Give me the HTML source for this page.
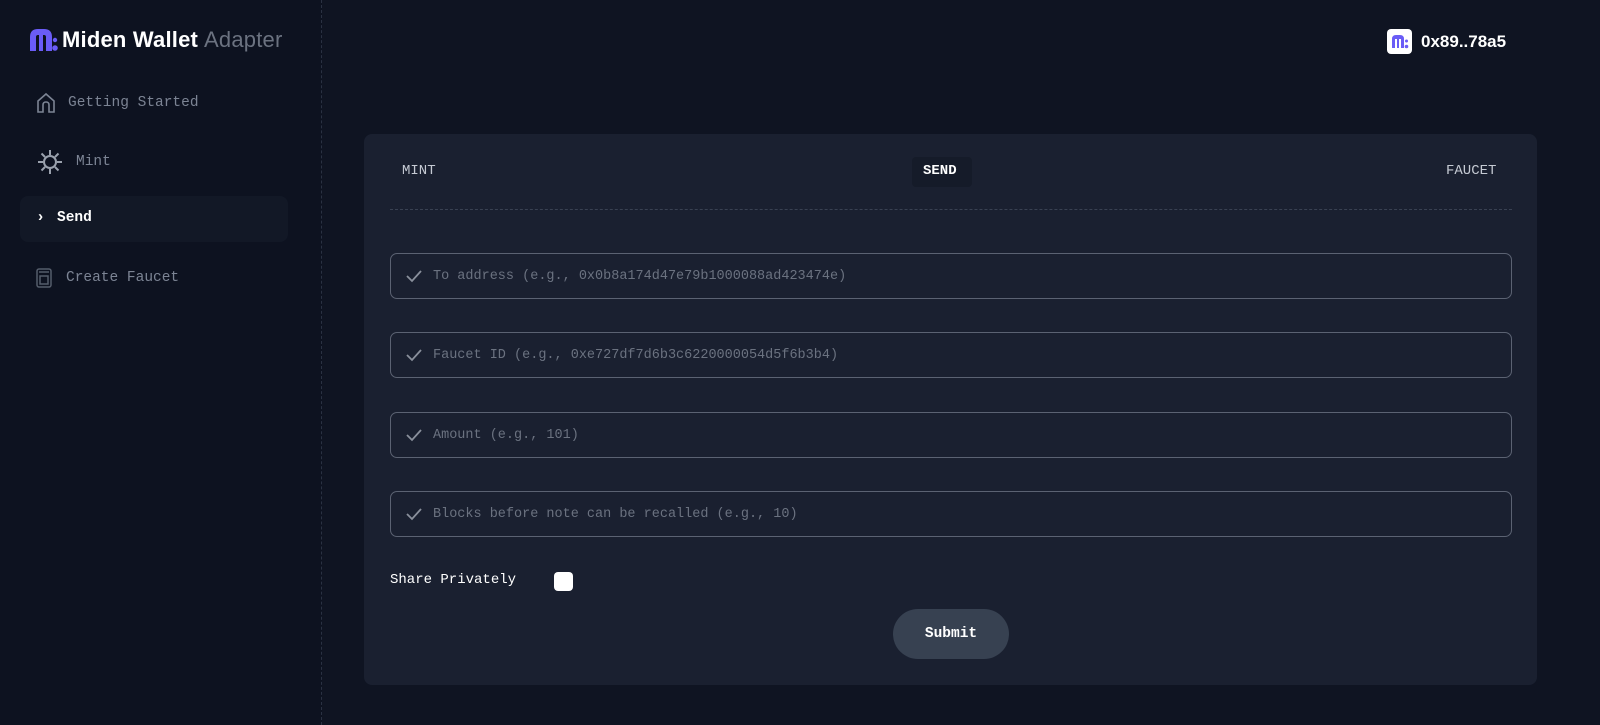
<!DOCTYPE html>
<html><head><meta charset="utf-8"><style>
*{box-sizing:border-box;margin:0;padding:0}
body{width:1600px;height:725px;background:#0f1422;font-family:"Liberation Mono",monospace;color:#fff;position:relative;overflow:hidden}
.side{position:absolute;left:0;top:0;width:322px;height:725px;background:#0d1220;border-right:1px dashed #2a3142}
.logo{position:absolute;left:30px;top:27px;display:flex;align-items:center;font-family:"Liberation Sans",sans-serif;font-size:22px;font-weight:600;letter-spacing:0.2px}
.logo .a{color:#6b7280;font-weight:400;margin-left:6px}
.nav{position:absolute;left:36px;display:flex;align-items:center;font-size:14.5px;color:#7c8494}
.sel{position:absolute;left:20px;top:196px;width:268px;height:46px;background:#121826;border-radius:8px}
.acct{position:absolute;left:1387px;top:29px;display:flex;align-items:center;font-family:"Liberation Sans",sans-serif;font-weight:700;font-size:17px}
.card{position:absolute;left:364px;top:134px;width:1173px;height:551px;background:#1a2030;border-radius:8px}
.tab{position:absolute;top:163px;font-size:14px;color:#c5cad3}
.line{position:absolute;left:390px;top:209px;width:1122px;border-top:1px dashed #394152}
.inp{position:absolute;left:390px;width:1122px;height:46px;border:1.5px solid #5b6272;border-radius:7px;display:flex;align-items:center;padding-left:14px;font-size:13.5px;color:#6b7280}
.inp svg{margin-right:10px}
</style></head><body>
<div class="side">
 <div class="logo"><svg width="28" height="22" viewBox="0 0 28 22"><path d="M0 22V8Q0 0 8 0H14Q22 0 22 8V22H16V8Q16 6 14 6H13V22H9V6H8Q6 6 6 8V22Z" fill="#6a5cf6"/><circle cx="25" cy="19" r="2.8" fill="#6a5cf6"/><circle cx="25" cy="11" r="2.2" fill="#6a5cf6"/></svg><span style="margin-left:4px">Miden Wallet</span><span class="a">Adapter</span></div>
 <div class="sel"></div>
 <div class="nav" style="top:92px"><svg width="20" height="22" viewBox="0 0 20 22" fill="none" stroke="#7c8494" stroke-width="1.6"><path d="M2 20V9L10 2L18 9V20H13V13Q13 10 10 10Q7 10 7 13V20Z"/></svg><span style="margin-left:12px">Getting Started</span></div>
 <div class="nav" style="top:148px"><svg width="28" height="28" viewBox="0 0 28 28" fill="none" stroke="#9aa1ad" stroke-width="2"><circle cx="14" cy="14" r="6"/><path d="M14 2v5M14 21v5M2 14h5M21 14h5M5.5 5.5l3.5 3.5M19 19l3.5 3.5M5.5 22.5L9 19M19 9l3.5-3.5"/></svg><span style="margin-left:12px">Mint</span></div>
 <div class="nav" style="top:209px;color:#fff;font-weight:700"><span style="font-size:15px;margin-right:12px">›</span>Send</div>
 <div class="nav" style="top:268px"><svg width="16" height="20" viewBox="0 0 16 20" fill="none" stroke="#555d6b" stroke-width="1.5"><rect x="1" y="1" width="14" height="18" rx="2"/><rect x="4" y="8" width="8" height="8"/><path d="M3 4h10"/></svg><span style="margin-left:14px">Create Faucet</span></div>
</div>
<div class="acct"><svg width="25" height="25" viewBox="0 0 25 25"><rect width="25" height="25" rx="4" fill="#fff"/><path d="M5 19V10Q5 6 9 6H13Q17 6 17 10V19H14V10H12V19H10V10H8V19Z" fill="#6a5cf6"/><circle cx="19.5" cy="17.5" r="1.8" fill="#6a5cf6"/><circle cx="19.5" cy="12" r="1.5" fill="#6a5cf6"/></svg><span style="margin-left:9px">0x89..78a5</span></div>
<div class="card"></div>
<div class="tab" style="left:402px">MINT</div>
<div style="position:absolute;left:912px;top:157px;width:60px;height:30px;background:#151b29;border-radius:4px"></div>
<div class="tab" style="left:923px;color:#fff;font-weight:700">SEND</div>
<div class="tab" style="left:1446px">FAUCET</div>
<div class="line"></div>
<div class="inp" style="top:253px"><svg width="18" height="14" viewBox="0 0 18 14" fill="none" stroke="#8a909c" stroke-width="1.8"><path d="M2 7l5 5L16 2"/></svg>To address (e.g., 0x0b8a174d47e79b1000088ad423474e)</div>
<div class="inp" style="top:332px"><svg width="18" height="14" viewBox="0 0 18 14" fill="none" stroke="#8a909c" stroke-width="1.8"><path d="M2 7l5 5L16 2"/></svg>Faucet ID (e.g., 0xe727df7d6b3c6220000054d5f6b3b4)</div>
<div class="inp" style="top:412px"><svg width="18" height="14" viewBox="0 0 18 14" fill="none" stroke="#8a909c" stroke-width="1.8"><path d="M2 7l5 5L16 2"/></svg>Amount (e.g., 101)</div>
<div class="inp" style="top:491px"><svg width="18" height="14" viewBox="0 0 18 14" fill="none" stroke="#8a909c" stroke-width="1.8"><path d="M2 7l5 5L16 2"/></svg>Blocks before note can be recalled (e.g., 10)</div>
<div style="position:absolute;left:390px;top:572px;font-size:14px">Share Privately</div>
<div style="position:absolute;left:554px;top:572px;width:19px;height:19px;background:#fff;border-radius:4px"></div>
<div style="position:absolute;left:893px;top:609px;width:116px;height:50px;background:#374151;border-radius:25px;font-size:14.5px;font-weight:700;display:flex;align-items:center;justify-content:center">Submit</div>
</body></html>
